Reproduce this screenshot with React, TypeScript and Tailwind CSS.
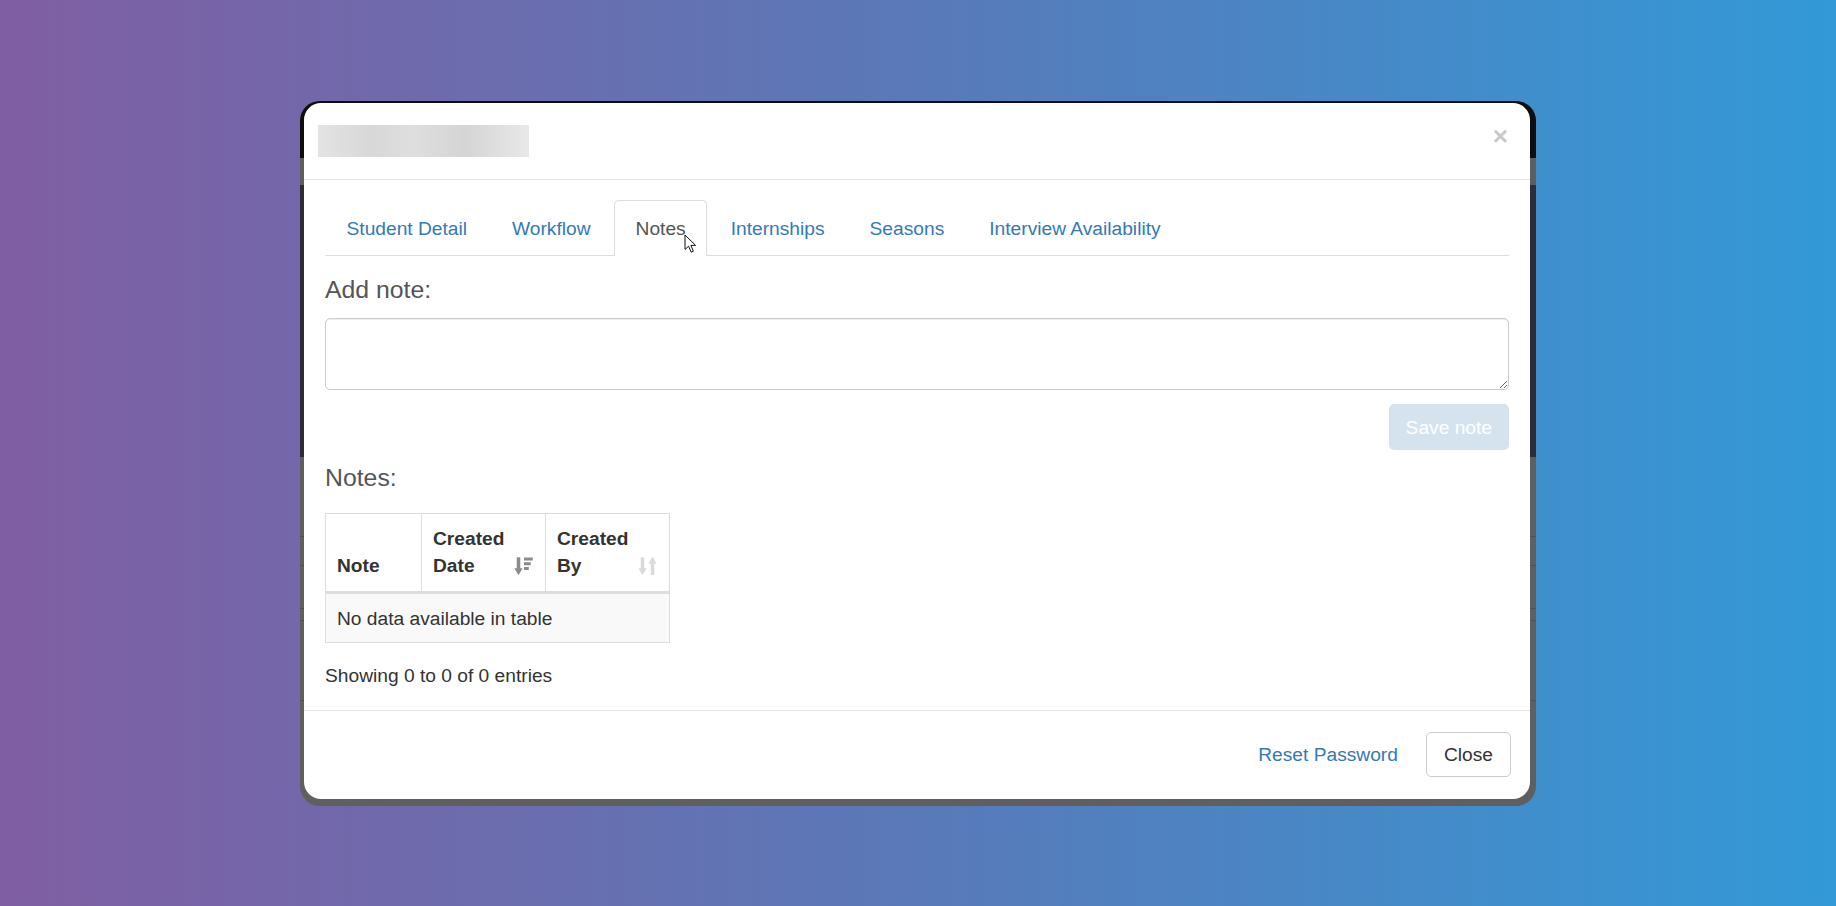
import { useState } from 'react';

const tabs = ['Student Detail', 'Workflow', 'Notes', 'Internships', 'Seasons', 'Interview Availability'];

// Sorted-descending indicator (arrow down with shrinking bars)
function SortDescIcon() {
  return (
    <svg width="20" height="20" viewBox="0 0 16 16" className="shrink-0">
      <rect x="2.2" y="1" width="2.8" height="9.5" fill="#8c8c8c" />
      <polygon points="0.3,9.8 6.9,9.8 3.6,15.4" fill="#8c8c8c" />
      <rect x="8" y="1.2" width="7" height="2.4" fill="#8c8c8c" />
      <rect x="8" y="5" width="5.4" height="2.4" fill="#8c8c8c" />
      <rect x="8" y="8.8" width="3.8" height="2.4" fill="#8c8c8c" />
    </svg>
  );
}

// Unsorted indicator (down + up arrows)
function SortBothIcon() {
  return (
    <svg width="20" height="20" viewBox="0 0 16 16" className="shrink-0">
      <rect x="2.2" y="1" width="2.8" height="9.5" fill="#dadada" />
      <polygon points="0.3,9.8 6.9,9.8 3.6,15.4" fill="#dadada" />
      <polygon points="8.3,6.2 14.9,6.2 11.6,0.6" fill="#dadada" />
      <rect x="10.2" y="5.5" width="2.8" height="9.7" fill="#dadada" />
    </svg>
  );
}

function Pointer() {
  return (
    <svg width="13" height="20" viewBox="0 0 13 20" className="absolute left-[70px] top-[34px] pointer-events-none">
      <path d="M1 1 L1 15.5 L4.6 12.2 L7.2 18.2 L9.4 17.2 L6.9 11.4 L11.6 11.4 Z" fill="#fff" stroke="#111" strokeWidth="1" strokeLinejoin="round" />
    </svg>
  );
}

export default function App() {
  const [active, setActive] = useState('Notes');
  const [note, setNote] = useState('');

  return (
    <div className="h-[906px] w-full bg-[linear-gradient(90deg,#805ea3,#5b78b7_48%,#3399d7)] flex justify-center pt-[101px] font-['Liberation_Sans',Arial,sans-serif]">
      {/* screenshot frame: dimmed page behind the modal */}
      <div className="relative w-[1236px] h-[705px] rounded-[20px] overflow-hidden bg-[#5f5f5f]">
        <div className="flex flex-col h-full">
          <div className="h-[57px] bg-[#0e0e0e]" />
          <div className="h-[27px] bg-[#5e5e5e]" />
          <div className="h-[272px] bg-[#2e2d35]" />
          <div className="flex-1 flex flex-col">
            <div className="h-[80px] border-b border-[#4f4f4f]" />
            <div className="h-[29px] border-b border-[#4f4f4f]" />
            <div className="h-[43px] border-b border-[#4f4f4f]" />
            <div className="h-[12px] border-b border-[#4f4f4f]" />
            <div className="h-[80px] border-b border-[#4f4f4f]" />
          </div>
        </div>

        {/* modal */}
        <div className="absolute left-[4px] top-[2px] w-[1226px] bg-white rounded-[17px] text-[19.2px] leading-[27px] text-[#333]">
          <div className="h-[77px] flex items-center justify-between pl-[14px] pr-[22px] border-b border-[#e5e5e5]">
            <div className="w-[211px] h-[32px] bg-[linear-gradient(90deg,#e3e3e3,#d8d8d8_25%,#dedede_45%,#d5d5d5_70%,#e8e8e8)] blur-[0.6px]" />
            <button className="mb-[11px] text-[26px] font-bold leading-none text-[#c9c9c9]">×</button>
          </div>

          <div className="pt-[20px] px-[21px] pb-[21px]">
            <ul className="flex border-b border-[#ddd]">
              {tabs.map((t) => {
                const on = t === active;
                return (
                  <li key={t} className="-mb-px mr-[2px] relative">
                    <button
                      onClick={() => setActive(t)}
                      className={
                        on
                          ? 'h-[56px] px-[20.5px] border border-[#ddd] border-b-white bg-white rounded-t-[5px] text-[#555]'
                          : 'h-[56px] px-[20.5px] border border-transparent text-[#337ab7]'
                      }
                    >
                      {t}
                    </button>
                    {on && <Pointer />}
                  </li>
                );
              })}
            </ul>

            <label className="block mt-[20px] text-[24.8px] leading-[27px] text-[#555]">Add note:</label>
            <textarea
              value={note}
              onChange={(e) => setNote(e.target.value)}
              className="block mt-[15px] w-full h-[72px] border border-[#ccc] rounded-[5px] shadow-[inset_0_1px_1px_rgba(0,0,0,0.075)] px-[14px] py-[7px] outline-none"
            />
            <div className="flex justify-end mt-[14px]">
              <button disabled className="h-[46px] px-[17px] rounded-[5px] bg-[#d5e3ef] text-white">
                Save note
              </button>
            </div>

            <h4 className="mt-[14px] text-[24.8px] leading-[27px] text-[#555]">Notes:</h4>

            <table className="mt-[22px] border-collapse border border-[#ddd]">
              <thead>
                <tr className="border-b-[3px] border-[#ddd]">
                  <th className="w-[96px] border border-[#ddd] px-[11px] pt-[11px] pb-[12px] text-left align-bottom font-bold">
                    Note
                  </th>
                  <th className="w-[124px] border border-[#ddd] pl-[11px] pr-[11px] pt-[11px] pb-[12px] text-left align-bottom font-bold">
                    <div className="flex items-end justify-between">
                      <span>Created<br />Date</span>
                      <span className="mb-[3px]"><SortDescIcon /></span>
                    </div>
                  </th>
                  <th className="w-[124px] border border-[#ddd] pl-[11px] pr-[11px] pt-[11px] pb-[12px] text-left align-bottom font-bold">
                    <div className="flex items-end justify-between">
                      <span>Created<br />By</span>
                      <span className="mb-[3px]"><SortBothIcon /></span>
                    </div>
                  </th>
                </tr>
              </thead>
              <tbody>
                <tr className="bg-[#f9f9f9]">
                  <td colSpan={3} className="h-[50px] px-[11px] border border-[#ddd]">
                    No data available in table
                  </td>
                </tr>
              </tbody>
            </table>

            <div className="mt-[19px]">Showing 0 to 0 of 0 entries</div>
          </div>

          <div className="border-t border-[#e5e5e5] pt-[21px] pb-[22px] pr-[19px] flex justify-end items-center gap-[14px]">
            <button className="h-[45px] px-[14px] text-[#337ab7]">Reset Password</button>
            <button className="h-[45px] px-[17px] border border-[#ccc] rounded-[5px] bg-white text-[#333]">Close</button>
          </div>
        </div>
      </div>
    </div>
  );
}
